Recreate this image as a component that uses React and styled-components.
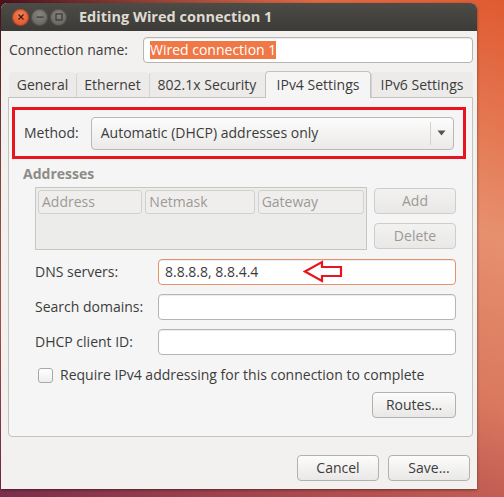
import React from 'react'
import styled, { createGlobalStyle } from 'styled-components'

const GlobalStyle = createGlobalStyle`
  html, body {
    margin: 0;
    padding: 0;
  }
  body {
    font-family: 'Open Sans', 'DejaVu Sans', sans-serif;
    font-size: 14px;
    line-height: 18px;
    color: #3c3c3c;
  }
`

const Desktop = styled.div`
  width: 504px;
  height: 497px;
  box-sizing: border-box;
  padding: 3px 27px 0 1px;
  background:
    radial-gradient(ellipse at 0% 0%, #4a121c 0%, rgba(74, 18, 28, 0) 45%),
    linear-gradient(200deg, #e05a30 0%, #e7906e 35%, #d9785e 60%, #b5504f 80%, #7a2c4c 100%);
  overflow: hidden;
`

const Window = styled.div`
  width: 476px;
  height: 486px;
  display: flex;
  flex-direction: column;
  background: #f2f1f0;
  border-radius: 6px 6px 0 0;
  box-shadow: 0 1px 3px rgba(0, 0, 0, 0.45);
  overflow: hidden;
`

const TitleBar = styled.div`
  height: 28px;
  flex-shrink: 0;
  display: flex;
  align-items: center;
  padding-left: 11px;
  gap: 2px;
  background: linear-gradient(#4c4b46, #3c3b37);
`

const WinButton = styled.div`
  width: 17px;
  height: 17px;
  border-radius: 50%;
  display: flex;
  align-items: center;
  justify-content: center;
  background: ${p => (p.$close ? 'radial-gradient(circle at 50% 35%, #f48057, #d9471c)' : 'radial-gradient(circle at 50% 35%, #86847e, #5e5c57)')};
  box-shadow: inset 0 0 0 1px rgba(0, 0, 0, 0.25);
`

const Title = styled.div`
  margin-left: 10px;
  font-weight: bold;
  font-size: 14.5px;
  color: #dfdbd2;
`

const Body = styled.div`
  flex: 1;
  display: flex;
  flex-direction: column;
  padding: 6px 4px 0 7px;
`

const NameRow = styled.div`
  display: flex;
  align-items: center;
  justify-content: space-between;
  padding-left: 1px;
`

const Entry = styled.div`
  position: relative;
  box-sizing: border-box;
  width: ${p => p.$w}px;
  height: ${p => p.$h || 26}px;
  background: #ffffff;
  border: 1px solid ${p => (p.$focus ? '#e4926c' : '#b8b5b0')};
  border-radius: 4px;
  box-shadow: inset 0 1px 1px rgba(0, 0, 0, 0.08);
  display: flex;
  align-items: center;
  padding-left: 6px;
`

const Selected = styled.span`
  background: #f07746;
  color: #ffffff;
  line-height: 18px;
`

const Notebook = styled.div`
  margin-top: 8px;
  display: flex;
  flex-direction: column;
`

const TabRow = styled.div`
  display: flex;
  align-items: flex-end;
  height: 26px;
  padding-left: 1px;
`

const Tab = styled.div`
  box-sizing: border-box;
  width: ${p => p.$w}px;
  height: ${p => (p.$active ? 27 : 25)}px;
  display: flex;
  align-items: center;
  justify-content: center;
  border: 1px solid ${p => (p.$active ? '#c4c2bd' : 'transparent')};
  border-bottom: none;
  border-left: 1px solid ${p => (p.$active ? '#c4c2bd' : p.$first ? 'transparent' : '#d6d4d0')};
  border-radius: 4px 4px 0 0;
  background: ${p => (p.$active ? '#f5f5f5' : '#ecebe9')};
  position: relative;
  z-index: ${p => (p.$active ? 1 : 0)};
  margin-bottom: ${p => (p.$active ? '-1px' : '0')};
`

const Panel = styled.div`
  box-sizing: border-box;
  height: 340px;
  width: 465px;
  background: #f5f5f5;
  border: 1px solid #c4c2bd;
  border-radius: 0 0 4px 4px;
  padding: 9px 7px 0 3px;
  display: flex;
  flex-direction: column;
`

const MethodBox = styled.div`
  box-sizing: border-box;
  width: 454px;
  height: 52px;
  border: 3px solid #e8141e;
  display: flex;
  align-items: center;
  padding-left: 9px;
  gap: 12px;
`

const Combo = styled.div`
  box-sizing: border-box;
  width: 363px;
  height: 33px;
  border: 1px solid #bab8b3;
  border-radius: 4px;
  background: linear-gradient(#fcfcfc, #ebeae8);
  display: flex;
  align-items: center;
  padding-left: 9px;
`

const ComboText = styled.div`
  flex: 1;
`

const ComboSep = styled.div`
  width: 1px;
  height: 23px;
  background: #d3d1cd;
`

const ComboArrow = styled.div`
  width: 22px;
  display: flex;
  justify-content: center;
`

const SectionTitle = styled.div`
  margin-top: 6px;
  padding-left: 11px;
  font-weight: bold;
  color: #8e8b86;
`

const AddrRow = styled.div`
  margin-top: 4px;
  padding-left: 23px;
  display: flex;
  gap: 7px;
`

const Table = styled.div`
  box-sizing: border-box;
  width: 332px;
  height: 63px;
  border: 1px solid #c8c6c2;
  background: #ececeb;
  padding: 2px;
  display: flex;
  align-items: flex-start;
  gap: 3px;
`

const Header = styled.div`
  box-sizing: border-box;
  width: ${p => p.$w}px;
  height: 24px;
  border: 1px solid #d3d1cd;
  border-radius: 3px;
  background: #efeeed;
  color: #9c9a96;
  display: flex;
  align-items: center;
  padding-left: 3px;
`

const SideButtons = styled.div`
  display: flex;
  flex-direction: column;
  gap: 9px;
  padding-top: 1px;
`

const Button = styled.div`
  box-sizing: border-box;
  width: ${p => p.$w || 82}px;
  height: 26px;
  border: 1px solid ${p => (p.$disabled ? '#cfcdc9' : '#b3b1ad')};
  border-radius: 4px;
  background: ${p => (p.$disabled ? 'linear-gradient(#f2f2f1, #e9e8e6)' : 'linear-gradient(#fcfcfc, #e9e8e6)')};
  color: ${p => (p.$disabled ? '#9c9a96' : '#3c3c3c')};
  display: flex;
  align-items: center;
  justify-content: center;
`

const FieldRow = styled.div`
  margin-top: ${p => p.$mt}px;
  padding-left: 23px;
  display: flex;
  align-items: center;
  justify-content: space-between;
  width: 421px;
`

const Arrow = styled.svg`
  position: absolute;
  left: 144px;
  top: 0px;
`

const CheckRow = styled.div`
  margin-top: 11px;
  padding-left: 26px;
  display: flex;
  align-items: center;
  gap: 7px;
`

const Check = styled.div`
  box-sizing: border-box;
  width: 15px;
  height: 15px;
  border: 1px solid #aaa8a4;
  border-radius: 3px;
  background: linear-gradient(#ffffff, #eeeeed);
`

const RoutesRow = styled.div`
  margin-top: 8px;
  display: flex;
  justify-content: flex-end;
  width: 444px;
`

const Footer = styled.div`
  margin-top: 18px;
  display: flex;
  justify-content: flex-end;
  gap: 9px;
  width: 462px;
`

export default function App() {
  return (
    <>
      <GlobalStyle />
      <Desktop>
        <Window>
          <TitleBar>
            <WinButton $close>
              <svg width="8" height="8" viewBox="0 0 8 8">
                <path d="M1.5 1.5 L6.5 6.5 M6.5 1.5 L1.5 6.5" stroke="#4a1a0c" strokeWidth="1.3" />
              </svg>
            </WinButton>
            <WinButton>
              <svg width="8" height="8" viewBox="0 0 8 8">
                <rect x="0.5" y="3.5" width="7" height="1.2" fill="#3a3935" />
              </svg>
            </WinButton>
            <WinButton>
              <svg width="8" height="8" viewBox="0 0 8 8">
                <rect x="1" y="1" width="6" height="6" fill="none" stroke="#3a3935" strokeWidth="1.2" />
              </svg>
            </WinButton>
            <Title>Editing Wired connection 1</Title>
          </TitleBar>
          <Body>
            <NameRow>
              <span>Connection name:</span>
              <Entry $w={330}>
                <Selected>Wired connection 1</Selected>
              </Entry>
            </NameRow>
            <Notebook>
              <TabRow>
                <Tab $w={67} $first>General</Tab>
                <Tab $w={73}>Ethernet</Tab>
                <Tab $w={116}>802.1x Security</Tab>
                <Tab $w={106} $active>IPv4 Settings</Tab>
                <Tab $w={102}>IPv6 Settings</Tab>
              </TabRow>
              <Panel>
                <MethodBox>
                  <span>Method:</span>
                  <Combo>
                    <ComboText>Automatic (DHCP) addresses only</ComboText>
                    <ComboSep />
                    <ComboArrow>
                      <svg width="9" height="6" viewBox="0 0 9 6">
                        <path d="M0.5 0.5 L8.5 0.5 L4.5 5.5 Z" fill="#555450" />
                      </svg>
                    </ComboArrow>
                  </Combo>
                </MethodBox>
                <SectionTitle>Addresses</SectionTitle>
                <AddrRow>
                  <Table>
                    <Header $w={105}>Address</Header>
                    <Header $w={110}>Netmask</Header>
                    <Header $w={107}>Gateway</Header>
                  </Table>
                  <SideButtons>
                    <Button $disabled>Add</Button>
                    <Button $disabled>Delete</Button>
                  </SideButtons>
                </AddrRow>
                <FieldRow $mt={9}>
                  <span>DNS servers:</span>
                  <Entry $w={298} $focus>
                    8.8.8.8, 8.8.4.4
                    <Arrow width="42" height="24" viewBox="0 0 42 24">
                      <path
                        d="M2 11.5 L19 2 L19 7 L38 7 L38 16 L19 16 L19 21 Z"
                        fill="none"
                        stroke="#e8141e"
                        strokeWidth="2.2"
                        strokeLinejoin="miter"
                      />
                    </Arrow>
                  </Entry>
                </FieldRow>
                <FieldRow $mt={9}>
                  <span>Search domains:</span>
                  <Entry $w={298} />
                </FieldRow>
                <FieldRow $mt={9}>
                  <span>DHCP client ID:</span>
                  <Entry $w={298} />
                </FieldRow>
                <CheckRow>
                  <Check />
                  <span>Require IPv4 addressing for this connection to complete</span>
                </CheckRow>
                <RoutesRow>
                  <Button $w={84}>Routes…</Button>
                </RoutesRow>
              </Panel>
            </Notebook>
            <Footer>
              <Button>Cancel</Button>
              <Button>Save...</Button>
            </Footer>
          </Body>
        </Window>
      </Desktop>
    </>
  )
}
